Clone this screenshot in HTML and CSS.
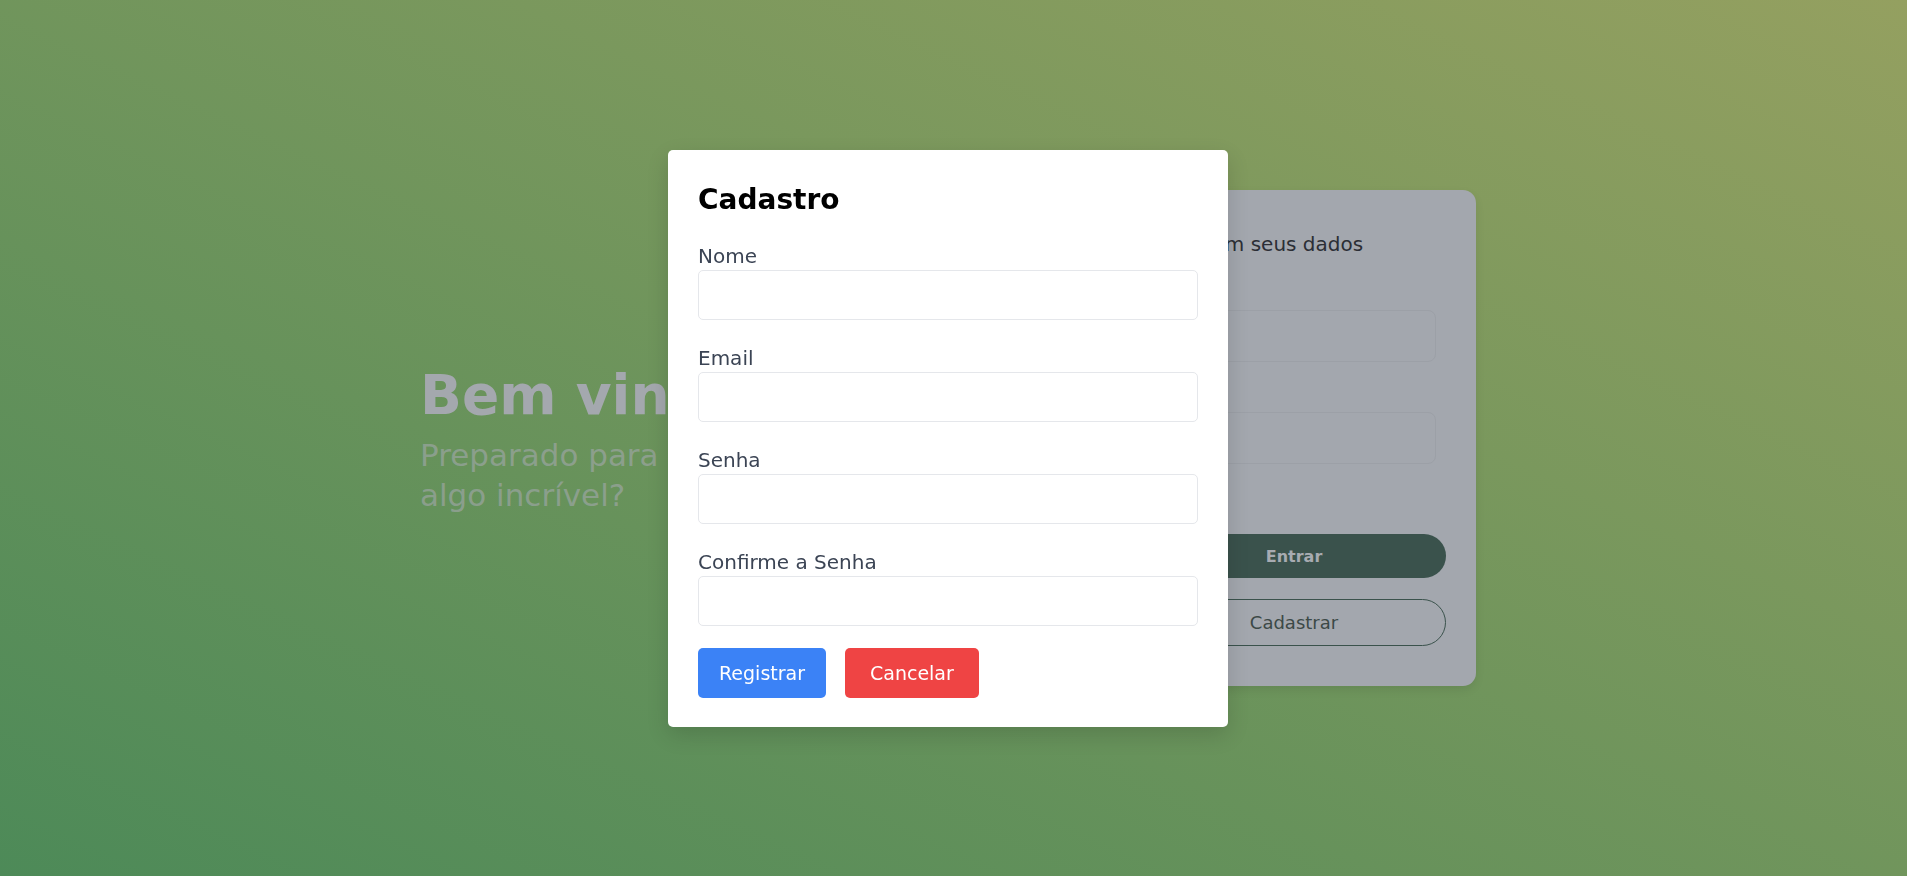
FILE: index.html
```html
<!DOCTYPE html>
<html lang="pt-BR">
<head>
<meta charset="utf-8">
<title>Cadastro</title>
<link rel="stylesheet" href="styles.css">
</head>
<body>
<main class="page">
  <section class="hero">
    <h1 class="hero-title">Bem vindo!</h1>
    <p class="hero-sub">Preparado para criar<br>algo incrível?</p>
  </section>
  <section class="login-card">
    <p class="login-intro">Entre com seus dados</p>
    <label class="login-label">Email</label>
    <input class="login-input" type="email">
    <label class="login-label">Senha</label>
    <input class="login-input login-input-last" type="password">
    <button class="btn-enter" type="button">Entrar</button>
    <button class="btn-signup" type="button">Cadastrar</button>
  </section>
</main>
<div class="overlay">
  <form class="modal">
    <h2 class="modal-title">Cadastro</h2>
    <div class="field">
      <label>Nome</label>
      <input type="text">
    </div>
    <div class="field">
      <label>Email</label>
      <input type="email">
    </div>
    <div class="field">
      <label>Senha</label>
      <input type="password">
    </div>
    <div class="field">
      <label>Confirme a Senha</label>
      <input type="password">
    </div>
    <div class="actions">
      <button class="btn btn-primary" type="button">Registrar</button>
      <button class="btn btn-danger" type="button">Cancelar</button>
    </div>
  </form>
</div>
</body>
</html>
```

FILE: styles.css
```css
html, body {
  margin: 0;
  height: 100%;
}

body {
  font-family: "DejaVu Sans", sans-serif;
  background: linear-gradient(to top right, #4d8a58, #94a060);
  overflow: hidden;
}

.page {
  height: 100vh;
  box-sizing: border-box;
  display: flex;
  align-items: center;
  justify-content: center;
  gap: 352px;
  padding-right: 11px;
}

.hero {
  width: 340px;
}

.hero-title {
  margin: 0 0 7px;
  font-size: 55px;
  line-height: 66px;
  font-weight: 700;
  color: #a4a8ae;
  white-space: nowrap;
}

.hero-sub {
  margin: 0;
  font-size: 31px;
  line-height: 40px;
  color: rgba(164, 168, 174, 0.62);
  white-space: nowrap;
}

.login-card {
  width: 364px;
  box-sizing: border-box;
  padding: 40px 30px;
  background: #a3a7ae;
  border-radius: 13px;
  display: flex;
  flex-direction: column;
  box-shadow: 0 4px 10px rgba(0, 0, 0, 0.08);
}

.login-intro {
  margin: 0 0 20px;
  font-size: 20px;
  line-height: 28px;
  color: #2b2e35;
  white-space: nowrap;
}

.login-label {
  font-size: 18px;
  line-height: 28px;
  color: #2b2e35;
}

.login-input {
  margin: 4px 10px 18px 0;
  height: 52px;
  box-sizing: border-box;
  border: 1px solid #9ca0a7;
  border-radius: 8px;
  background: transparent;
}

.login-input-last {
  margin-bottom: 70px;
}

.btn-enter {
  height: 44px;
  margin-bottom: 21px;
  border: 0;
  border-radius: 999px;
  background: #3a524c;
  color: #a7abb1;
  font-family: "DejaVu Sans", sans-serif;
  font-size: 16px;
  font-weight: 700;
}

.btn-signup {
  height: 47px;
  border: 1px solid #3a524c;
  border-radius: 999px;
  background: transparent;
  color: #3c4947;
  font-family: "DejaVu Sans", sans-serif;
  font-size: 18px;
}

.overlay {
  position: fixed;
  inset: 0;
  box-sizing: border-box;
  display: flex;
  align-items: center;
  justify-content: center;
  padding-right: 11px;
}

.modal {
  width: 560px;
  box-sizing: border-box;
  padding: 32px 30px 29px;
  background: #fff;
  border-radius: 5px;
  box-shadow: 0 8px 22px rgba(0, 0, 0, 0.14);
}

.modal-title {
  margin: 0 0 24px;
  font-size: 28px;
  line-height: 36px;
  font-weight: 700;
  color: #000;
}

.field + .field {
  margin-top: 24px;
}

.field label {
  display: block;
  font-size: 20px;
  line-height: 28px;
  color: #3b4454;
}

.field input {
  display: block;
  width: 100%;
  height: 50px;
  box-sizing: border-box;
  border: 1px solid #e5e7eb;
  border-radius: 5px;
  background: #fff;
}

.actions {
  display: flex;
  gap: 19px;
  margin-top: 22px;
}

.btn {
  height: 50px;
  padding: 0 21px;
  border: 0;
  border-radius: 5px;
  color: #fff;
  font-family: "DejaVu Sans", sans-serif;
  font-size: 19px;
}

.btn-primary {
  background: #3b82f6;
}

.btn-danger {
  background: #ef4444;
  padding: 0 25px;
}
```
